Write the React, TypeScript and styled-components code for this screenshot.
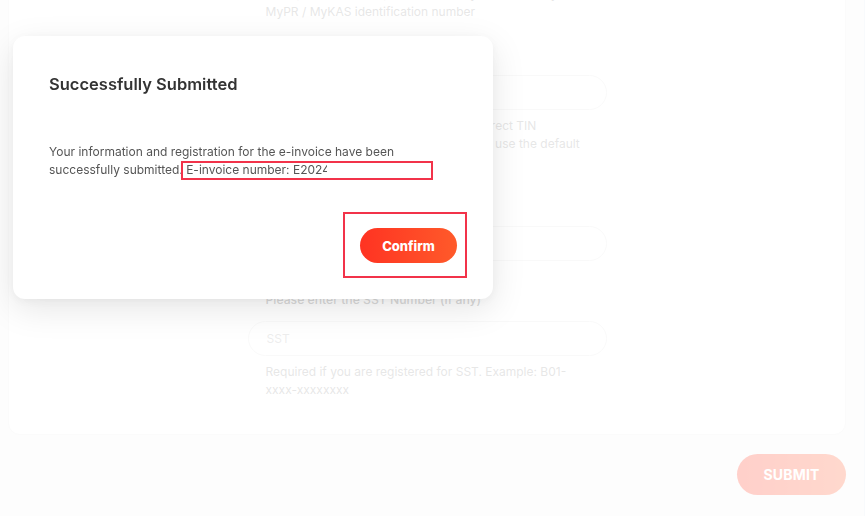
import React from "react";
import styled, { createGlobalStyle } from "styled-components";

const GlobalStyle = createGlobalStyle`
  html, body {
    margin: 0;
    padding: 0;
    background: #f5f5f5;
    font-family: Inter, "Noto Sans", "Liberation Sans", sans-serif;
    overflow: hidden;
  }
  * { box-sizing: border-box; }
`;

const Page = styled.div`
  min-height: 100vh;
  display: flex;
  flex-direction: column;
  padding: 0 18px 0 8px;
  border-right: 1px solid #dfe9f3;
`;

const Card = styled.div`
  margin-top: -16px;
  background: #ffffff;
  border: 1px solid #ececec;
  border-radius: 12px;
  padding: 0 0 35px;
  display: flex;
  justify-content: center;
`;

const Form = styled.div`
  width: 359px;
  display: flex;
  flex-direction: column;
`;

const Field = styled.div<{ $gap: number }>`
  display: flex;
  flex-direction: column;
  margin-top: ${(p) => p.$gap}px;
`;

const Label = styled.div`
  font-size: 12.2px;
  line-height: 18px;
  color: #666;
  padding: 0 18px;
  margin-bottom: 12px;
  font-weight: 500;
`;

const Input = styled.input`
  height: 35px;
  border: 1px solid #e6e6e6;
  border-radius: 18px;
  padding: 0 18px;
  font-family: inherit;
  font-size: 12px;
  color: #333;
  background: #fff;
  outline: none;
  &::placeholder { color: #b3b3b3; }
`;

const Helper = styled.div<{ $first?: boolean }>`
  font-size: 12px;
  line-height: 18px;
  color: #999;
  padding: 0 18px;
  margin-top: ${(p) => (p.$first ? 0 : 7)}px;
`;

const Footer = styled.div`
  display: flex;
  justify-content: flex-end;
  margin-top: 19px;
`;

const SubmitButton = styled.button`
  width: 109px;
  height: 41px;
  border: none;
  border-radius: 21px;
  background: linear-gradient(90deg, #ff3a24, #ff5e30);
  color: #fff;
  font-family: inherit;
  font-weight: 700;
  font-size: 14px;
  letter-spacing: 0.2px;
`;

const Overlay = styled.div`
  position: fixed;
  inset: 0;
  background: rgba(255, 255, 255, 0.76);
`;

const Modal = styled.div`
  position: fixed;
  left: 13px;
  top: 36px;
  width: 480px;
  background: #fff;
  border-radius: 12px;
  padding: 36px;
  box-shadow: 0 10px 34px rgba(0, 0, 0, 0.1), 0 2px 8px rgba(0, 0, 0, 0.04);
  display: flex;
  flex-direction: column;
`;

const Title = styled.h2`
  margin: 0;
  font-size: 16.5px;
  line-height: 24px;
  font-weight: 600;
  color: #333;
`;

const Body = styled.p`
  margin: 47px 0 0;
  font-size: 12px;
  line-height: 18px;
  color: #555;
`;

const Clip = styled.span`
  display: inline-block;
  vertical-align: top;
  width: 34px;
  overflow: hidden;
  white-space: nowrap;
`;

const Actions = styled.div`
  display: flex;
  justify-content: flex-end;
  margin-top: 49px;
`;

const ConfirmButton = styled.button`
  width: 97px;
  height: 35px;
  border: none;
  border-radius: 18px;
  background: linear-gradient(90deg, #ff3322, #ff5a2a);
  color: #fff;
  font-family: inherit;
  font-weight: 800;
  font-size: 13px;
`;

const Mark = styled.div<{ $l: number; $t: number; $w: number; $h: number }>`
  position: absolute;
  left: ${(p) => p.$l}px;
  top: ${(p) => p.$t}px;
  width: ${(p) => p.$w}px;
  height: ${(p) => p.$h}px;
  border: 2px solid #f2334a;
  pointer-events: none;
`;

export default function App() {
  return (
    <>
      <GlobalStyle />
      <Page>
        <Card>
          <Form>
            <Helper $first>
              Example: NRIC, Passport number, MyTentera (Army)
              <br />
              MyPR / MyKAS identification number
            </Helper>
            <Field $gap={24}>
              <Label>TIN Number</Label>
              <Input placeholder="TIN" />
              <Helper>
                Please make sure that you enter the correct TIN
                <br />
                If you do not have a TIN, the system will use the default
                <br />
                TIN.
              </Helper>
            </Field>
            <Field $gap={25}>
              <Label>Phone</Label>
              <Input placeholder="Phone" />
            </Field>
            <Field $gap={30}>
              <Label>Please enter the SST Number (if any)</Label>
              <Input placeholder="SST" />
              <Helper>
                Required if you are registered for SST. Example: B01-
                <br />
                xxxx-xxxxxxxx
              </Helper>
            </Field>
          </Form>
        </Card>
        <Footer>
          <SubmitButton>SUBMIT</SubmitButton>
        </Footer>
      </Page>
      <Overlay />
      <Modal>
        <Title>Successfully Submitted</Title>
        <Body>
          Your information and registration for the e-invoice have been
          successfully submitted. E-invoice number: <Clip>E2024000123</Clip>
        </Body>
        <Actions>
          <ConfirmButton>Confirm</ConfirmButton>
        </Actions>
        <Mark $l={168} $t={125} $w={252} $h={19} />
        <Mark $l={330} $t={176} $w={124} $h={66} />
      </Modal>
    </>
  );
}
